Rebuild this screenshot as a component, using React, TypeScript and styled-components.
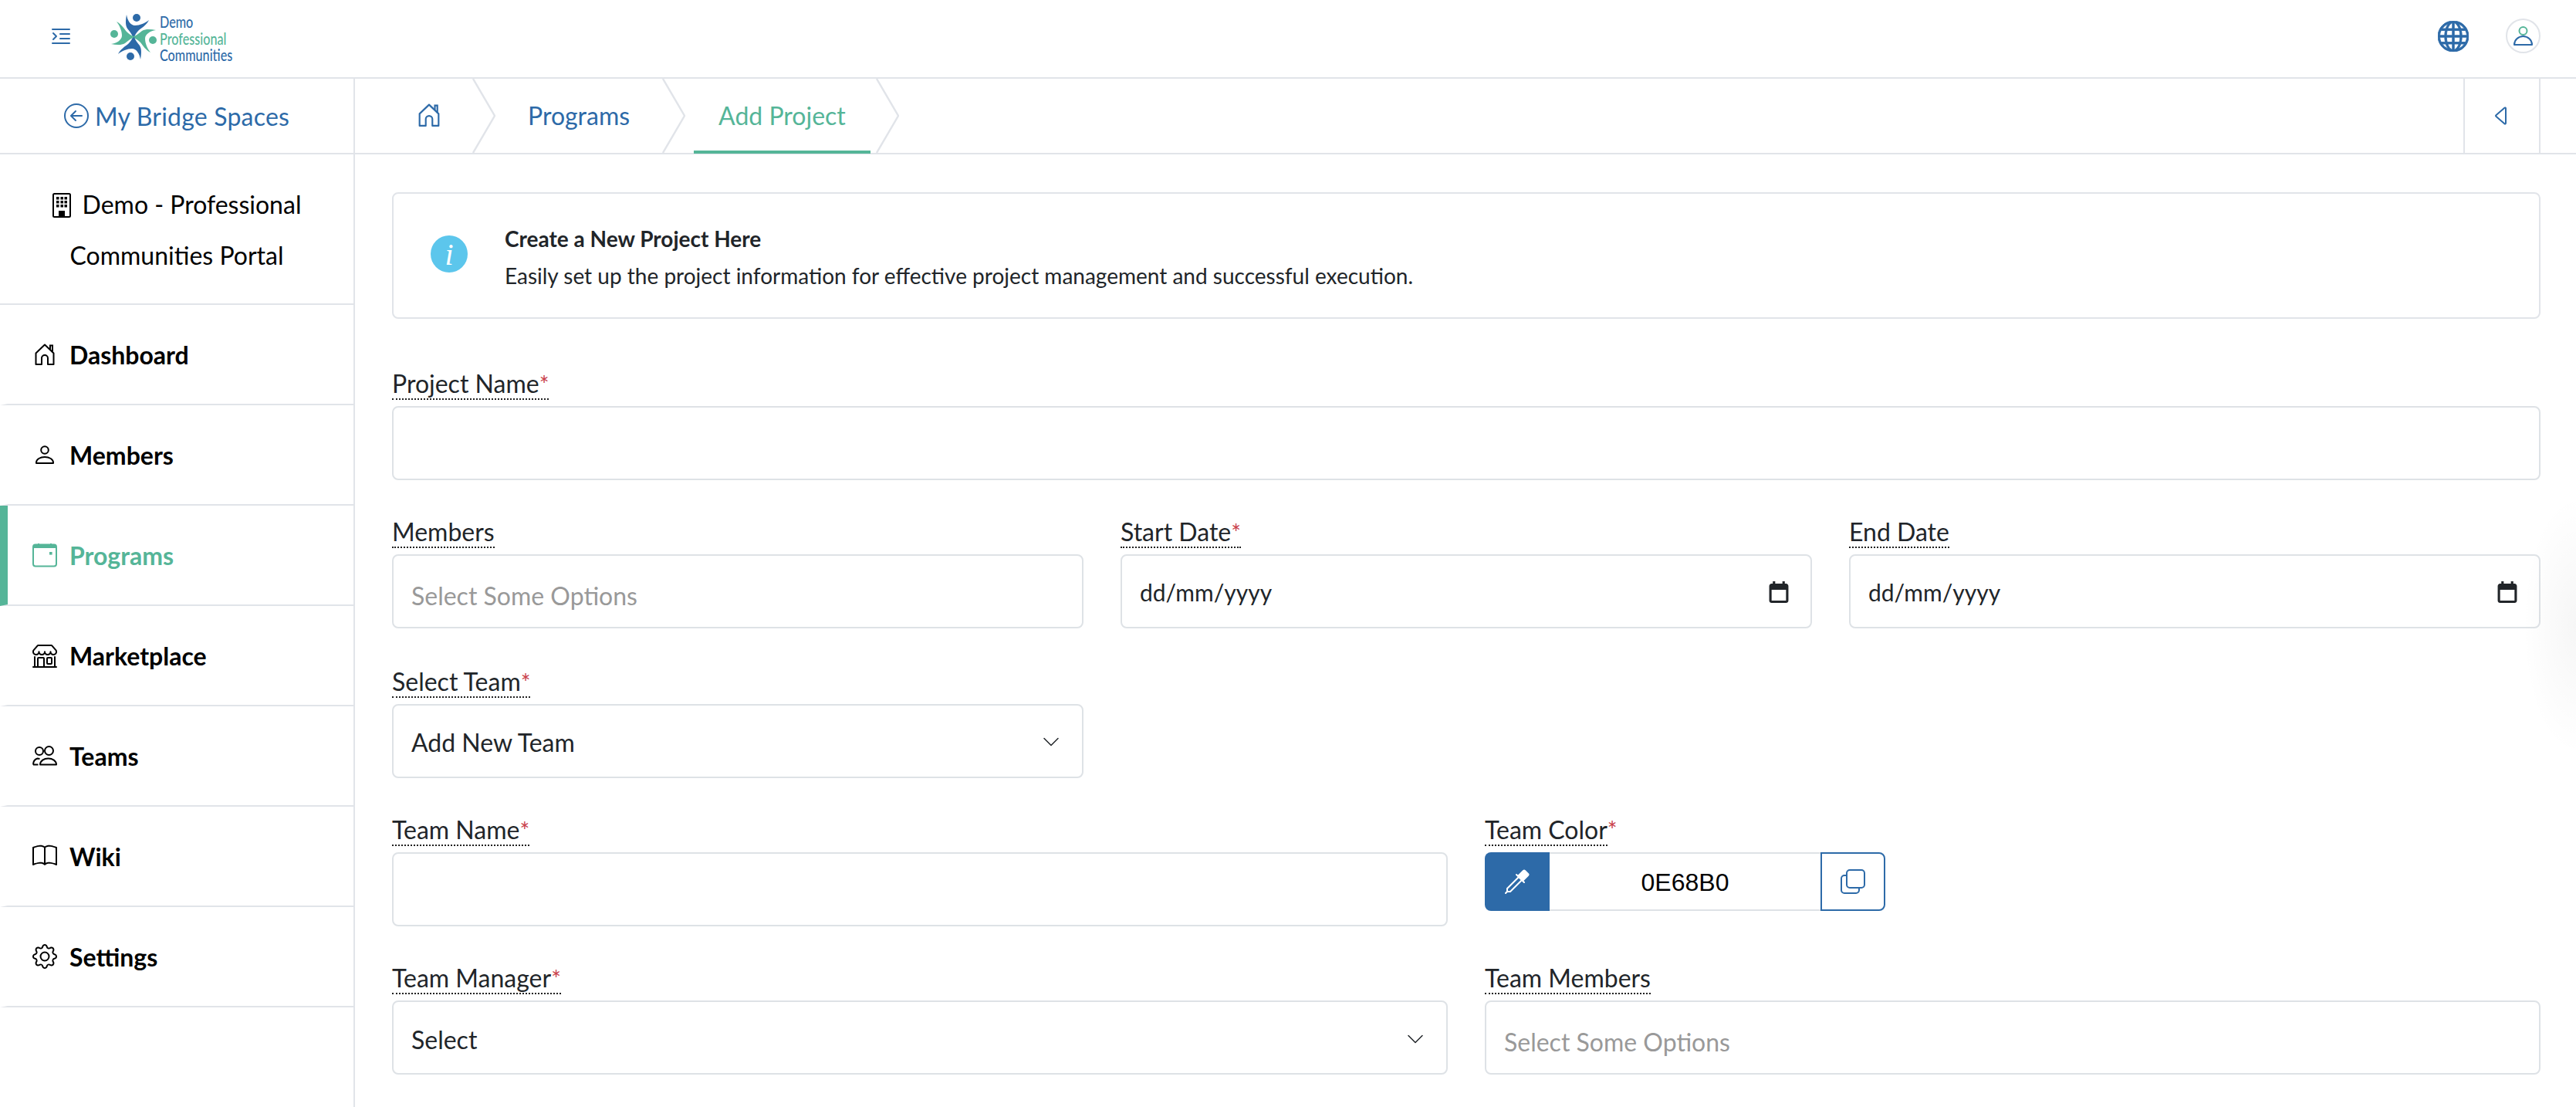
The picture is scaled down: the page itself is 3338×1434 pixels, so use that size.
import React, { FC } from 'react';
import styled, { createGlobalStyle } from 'styled-components';
import {
  BsArrowLeftCircle,
  BsBook,
  BsCaretLeft,
  BsChevronDown,
  BsEyedropper,
  BsGear,
  BsGlobe,
  BsShop,
  BsTextIndentLeft,
} from 'react-icons/bs';

const BLUE = '#2d6aa8';
const GREEN = '#55b598';
const LINE = '#e1e4e9';
const INK = '#212529';

const GlobalStyle = createGlobalStyle`
  html, body {
    margin: 0;
    padding: 0;
    background: #fff;
  }
  body {
    font-family: Lato, "Open Sans", sans-serif;
    color: ${INK};
    overflow: hidden;
  }
  * {
    box-sizing: border-box;
  }
`;

const Page = styled.div`
  width: 3338px;
  height: 1434px;
  overflow: hidden;
  position: relative;
`;

const TopBar = styled.header`
  height: 102px;
  border-bottom: 2px solid ${LINE};
  display: flex;
  align-items: center;
  padding: 0 46px 7px 63px;
`;

const Toggler = styled.span`
  display: flex;
  color: ${BLUE};
  margin-right: 48px;
`;

const Logo = styled.div`
  display: flex;
  align-items: center;
  gap: 4px;
  margin-top: 3px;
`;

const LogoWords = styled.div`
  font-family: 'Lato', sans-serif;
  font-size: 21px;
  font-weight: 500;
  line-height: 21.5px;
  margin-top: 3px;
  transform: scaleX(0.77);
  transform-origin: left center;
`;

const LogoLine = styled.div<{ $green?: boolean }>`
  color: ${({ $green }) => ($green ? GREEN : BLUE)};
`;

const TopActions = styled.div`
  margin-left: auto;
  display: flex;
  align-items: center;
  gap: 48px;
  color: ${BLUE};
`;

const Avatar = styled.span`
  width: 45px;
  height: 45px;
  border: 2px solid ${LINE};
  border-radius: 50%;
  display: flex;
  align-items: center;
  justify-content: center;
`;

const Body = styled.div`
  display: grid;
  grid-template-columns: 460px 1fr;
  height: 1332px;
`;

const Sidebar = styled.aside`
  border-right: 2px solid ${LINE};
`;

const BackLink = styled.a`
  height: 98px;
  border-bottom: 2px solid ${LINE};
  display: flex;
  align-items: center;
  justify-content: center;
  gap: 8px;
  color: ${BLUE};
  font-size: 32px;
  letter-spacing: 0.2px;
`;

const Brand = styled.div`
  height: 195px;
  border-bottom: 2px solid ${LINE};
  padding-top: 32px;
  text-align: center;
  font-size: 32px;
  line-height: 66px;
  color: #000;

  svg {
    vertical-align: -5px;
    margin-right: 15px;
  }
`;

const NavList = styled.nav`
  display: flex;
  flex-direction: column;
`;

const NavItem = styled.a<{ $active?: boolean }>`
  height: 130px;
  border-bottom: 2px solid ${LINE};
  border-left: 10px solid ${({ $active }) => ($active ? GREEN : 'transparent')};
  display: flex;
  align-items: center;
  gap: 16px;
  padding-left: 32px;
  font-size: 32px;
  font-weight: 700;
  color: ${({ $active }) => ($active ? GREEN : '#000')};
`;

const NavIcon = styled.span`
  width: 32px;
  height: 32px;
  display: flex;
  align-items: center;
  justify-content: center;
`;

const Main = styled.main`
  min-width: 0;
`;

const Crumbs = styled.div`
  height: 98px;
  border-bottom: 2px solid ${LINE};
  display: flex;
  align-items: stretch;
  padding-right: 46px;
`;

const Crumb = styled.a<{ $current?: boolean }>`
  display: flex;
  align-items: center;
  padding: 1px 32px 0;
  margin: ${({ $current }) => ($current ? '0 7px 0 11px' : '0')};
  font-size: 32px;
  color: ${({ $current }) => ($current ? GREEN : BLUE)};
  border-bottom: 4px solid ${({ $current }) => ($current ? GREEN : 'transparent')};
  margin-bottom: -1px;
`;

const HomeCrumb = styled(Crumb)`
  padding: 0 42px 0 82px;
`;

const PlainCrumb = styled(Crumb)`
  padding: 1px 42px 0;
`;

const CrumbArrow = styled.svg`
  width: 30px;
  height: 96px;
  flex: none;
`;

const PanelToggle = styled.button`
  margin-left: auto;
  width: 100px;
  background: none;
  border: 0;
  border-left: 2px solid ${LINE};
  border-right: 2px solid ${LINE};
  color: ${BLUE};
  display: flex;
  align-items: center;
  justify-content: center;
  padding: 0;
`;

const Content = styled.section`
  padding: 49px 46px 0 48px;
`;

const Notice = styled.div`
  height: 164px;
  border: 2px solid ${LINE};
  border-radius: 8px;
  display: flex;
  align-items: center;
  padding-left: 48px;
  gap: 48px;
  margin-bottom: 67px;
`;

const NoticeDot = styled.span`
  width: 48px;
  height: 48px;
  margin-bottom: 4px;
  border-radius: 50%;
  background: #5cc6ec;
  color: #fff;
  font-family: 'Liberation Serif', serif;
  font-style: italic;
  font-size: 40px;
  display: flex;
  align-items: center;
  justify-content: center;
`;

const NoticeCopy = styled.div`
  padding-top: 3px;
`;

const NoticeTitle = styled.div`
  font-size: 28px;
  font-weight: 700;
  line-height: 48px;
`;

const NoticeText = styled.div`
  font-size: 28px;
  line-height: 48px;
`;

const Row = styled.div<{ $cols: number; $after?: number }>`
  display: grid;
  grid-template-columns: repeat(${({ $cols }) => $cols}, 1fr);
  column-gap: 48px;
  margin-bottom: ${({ $after }) => $after ?? 50}px;
`;

const Field = styled.div``;

const Label = styled.label`
  display: flex;
  width: fit-content;
  height: 38px;
  margin-bottom: 8px;
  font-size: 32px;
  line-height: 33px;
  color: ${INK};
`;

const LabelText = styled.span`
  display: block;
  height: 38px;
  border-bottom: 2px dotted #222;
`;

const Star = styled.span`
  color: #c9404a;
  font-size: 30px;
`;

const Box = styled.div<{ $muted?: boolean; $drop?: number }>`
  height: 96px;
  border: 2px solid #dee2e6;
  border-radius: 8px;
  padding: ${({ $drop }) => $drop ?? 2}px 28px 0 23px;
  display: flex;
  align-items: center;
  justify-content: space-between;
  font-size: 32px;
  color: ${({ $muted }) => ($muted ? '#999' : INK)};
`;

const DateText = styled.span`
  font-size: 30px;
`;

const BlankInput = styled.input`
  width: 100%;
  height: 96px;
  display: block;
  border: 2px solid #dee2e6;
  border-radius: 8px;
  background: #fff;
  outline: none;
`;

const ColorGroup = styled.div`
  display: flex;
  height: 76px;
`;

const PickerButton = styled.span`
  width: 84px;
  background: ${BLUE};
  color: #fff;
  border-radius: 8px 0 0 8px;
  display: flex;
  align-items: center;
  justify-content: center;
`;

const HexValue = styled.span`
  width: 351px;
  padding-top: 3px;
  border-top: 2px solid #dee2e6;
  border-bottom: 2px solid #dee2e6;
  display: flex;
  align-items: center;
  justify-content: center;
  font-family: 'Liberation Sans', Arial, sans-serif;
  font-size: 32px;
  color: #000;
`;

const CopyButton = styled.span`
  width: 84px;
  border: 2px solid ${BLUE};
  border-radius: 0 8px 8px 0;
  color: ${BLUE};
  display: flex;
  align-items: center;
  justify-content: center;
`;

const EdgeGlow = styled.div`
  position: absolute;
  right: 0;
  top: 640px;
  width: 70px;
  height: 340px;
  background: radial-gradient(ellipse at right center, rgba(0, 0, 0, 0.035), rgba(0, 0, 0, 0) 70%);
`;

const HomeIcon: FC<{ size: number }> = ({ size }) => (
  <svg width={size} height={size + 2} viewBox="0 0 26 28" fill="none" stroke="currentColor" strokeWidth="2">
    <path d="M1.5 27V12.5L13 1.5l11.5 11V27H17v-8a4 4 0 0 0-8 0v8z" strokeLinejoin="round" />
    <path d="M20 8V2.5h3v9" />
  </svg>
);

const PersonIcon: FC = () => (
  <svg width="24" height="24" viewBox="0 0 24 24" fill="none" stroke="currentColor" strokeWidth="2">
    <circle cx="12" cy="6" r="4.8" />
    <path d="M1 23v-1c0-4 5-7 11-7s11 3 11 7v1z" strokeLinejoin="round" />
  </svg>
);

const CalendarIcon: FC = () => (
  <svg width="32" height="32" viewBox="0 0 32 32" fill="none" stroke="currentColor" strokeWidth="2">
    <rect x="1" y="2.5" width="30" height="28" rx="3" />
    <path d="M1 5h30" strokeWidth="4" />
    <path d="M8 1v3M24 1v3" />
    <rect x="22" y="12" width="3.6" height="3.6" fill="currentColor" stroke="none" />
  </svg>
);

const TeamIcon: FC = () => (
  <svg width="32" height="26" viewBox="0 0 32 26" fill="none" stroke="currentColor" strokeWidth="2">
    <circle cx="9" cy="7" r="5" />
    <circle cx="21.5" cy="6.5" r="5.5" />
    <path d="M10 24.5c0-5 5-8 10.5-8S31 19.5 31 24.5z" strokeLinejoin="round" />
    <path d="M1 24.5c0-4 2.500-7 5.500-8l3 .5M1 24.500h6.500" />
  </svg>
);

const BuildingIcon: FC = () => (
  <svg width="24" height="32" viewBox="0 0 24 32">
    <rect x="1" y="1" width="22" height="30" rx="1.500" fill="none" stroke="currentColor" strokeWidth="2" />
    {[5, 10.5, 15.5].map((x) =>
      [5, 10, 15].map((y) => <rect key={`${x}-${y}`} x={x} y={y} width="3.500" height="3.500" fill="currentColor" />),
    )}
    <rect x="8" y="23" width="8" height="8" fill="currentColor" />
  </svg>
);

const DateIcon: FC = () => (
  <svg width="26" height="28" viewBox="0 0 16 18" fill="currentColor">
    <path d="M14 2h-1V0h-2v2H5V0H3v2H2C.9 2 0 2.900 0 4v12c0 1.100.9 2 2 2h12c1.100 0 2-.9 2-2V4c0-1.100-.9-2-2-2zm0 14H2V7h12v9z" />
  </svg>
);

const CopyIcon: FC = () => (
  <svg width="32" height="32" viewBox="0 0 32 32" fill="none" stroke="currentColor" strokeWidth="2">
    <rect x="8" y="1" width="23" height="23" rx="4" />
    <path d="M8 8H5a4 4 0 0 0-4 4v15a4 4 0 0 0 4 4h15a4 4 0 0 0 4-4v-3" />
  </svg>
);

const LogoMark: FC = () => {
  const blade = (
    <>
      <path d="M21 1c1 7 5 14 11 14 6 0 13-3 18-7-3 6-9 10-13 13-3 3-5 6-6 9h-2c-1-4-4-7-7-11-3-5-2-12-1-18z" />
      <circle cx="34" cy="5" r="5" />
    </>
  );
  return (
    <svg width="60" height="60" viewBox="0 0 60 60">
      <g fill={BLUE}>{blade}</g>
      <g fill={GREEN} transform="rotate(90 30 30)">{blade}</g>
      <g fill={BLUE} transform="rotate(180 30 30)">{blade}</g>
      <g fill={GREEN} transform="rotate(270 30 30)">{blade}</g>
    </svg>
  );
};

const navItems = [
  { label: 'Dashboard', icon: <HomeIcon size={26} /> },
  { label: 'Members', icon: <PersonIcon /> },
  { label: 'Programs', icon: <CalendarIcon />, active: true },
  { label: 'Marketplace', icon: <BsShop size={32} /> },
  { label: 'Teams', icon: <TeamIcon /> },
  { label: 'Wiki', icon: <BsBook size={32} /> },
  { label: 'Settings', icon: <BsGear size={32} /> },
];

type LabelProps = { text: string; required?: boolean; starOutside?: boolean };

const FieldLabel: FC<LabelProps> = ({ text, required, starOutside }) => (
  <Label>
    <LabelText>
      {text}
      {required && !starOutside && <Star>*</Star>}
    </LabelText>
    {starOutside && <Star>*</Star>}
  </Label>
);

const Arrow: FC = () => (
  <CrumbArrow viewBox="0 0 30 96" fill="none" stroke={LINE} strokeWidth="2.4">
    <path d="M1 0l28 48L1 96" />
  </CrumbArrow>
);

const App: FC = () => (
  <Page>
    <GlobalStyle />
    <TopBar>
      <Toggler>
        <BsTextIndentLeft size={32} />
      </Toggler>
      <Logo>
        <LogoMark />
        <LogoWords>
          <LogoLine>Demo</LogoLine>
          <LogoLine $green>Professional</LogoLine>
          <LogoLine>Communities</LogoLine>
        </LogoWords>
      </Logo>
      <TopActions>
        <BsGlobe size={40} stroke="currentColor" strokeWidth={0.35} />
        <Avatar>
          <svg width="25" height="25" viewBox="0 0 25 25" fill="none" strokeWidth="2">
            <circle cx="12.500" cy="6" r="5" stroke={GREEN} />
            <path d="M1 24c0-6 5-11 11.500-11S24 18 24 24z" stroke={BLUE} strokeLinejoin="round" />
          </svg>
        </Avatar>
      </TopActions>
    </TopBar>
    <Body>
      <Sidebar>
        <BackLink>
          <BsArrowLeftCircle size={32} />
          My Bridge Spaces
        </BackLink>
        <Brand>
          <BuildingIcon />
          Demo - Professional
          <br />
          Communities Portal
        </Brand>
        <NavList>
          {navItems.map((item) => (
            <NavItem key={item.label} $active={item.active}>
              <NavIcon>{item.icon}</NavIcon>
              {item.label}
            </NavItem>
          ))}
        </NavList>
      </Sidebar>
      <Main>
        <Crumbs>
          <HomeCrumb>
            <HomeIcon size={28} />
          </HomeCrumb>
          <Arrow />
          <PlainCrumb>Programs</PlainCrumb>
          <Arrow />
          <Crumb $current>Add Project</Crumb>
          <Arrow />
          <PanelToggle>
            <BsCaretLeft size={32} />
          </PanelToggle>
        </Crumbs>
        <Content>
          <Notice>
            <NoticeDot>i</NoticeDot>
            <NoticeCopy>
              <NoticeTitle>Create a New Project Here</NoticeTitle>
              <NoticeText>
                Easily set up the project information for effective project management and successful execution.
              </NoticeText>
            </NoticeCopy>
          </Notice>
          <Row $cols={1}>
            <Field>
              <FieldLabel text="Project Name" required />
              <BlankInput />
            </Field>
          </Row>
          <Row $cols={3} $after={52}>
            <Field>
              <FieldLabel text="Members" />
              <Box $muted $drop={10}>Select Some Options</Box>
            </Field>
            <Field>
              <FieldLabel text="Start Date" required />
              <Box>
                <DateText>dd/mm/yyyy</DateText>
                <DateIcon />
              </Box>
            </Field>
            <Field>
              <FieldLabel text="End Date" />
              <Box>
                <DateText>dd/mm/yyyy</DateText>
                <DateIcon />
              </Box>
            </Field>
          </Row>
          <Row $cols={3}>
            <Field>
              <FieldLabel text="Select Team" required />
              <Box>
                Add New Team
                <BsChevronDown size={24} />
              </Box>
            </Field>
          </Row>
          <Row $cols={2}>
            <Field>
              <FieldLabel text="Team Name" required />
              <BlankInput />
            </Field>
            <Field>
              <FieldLabel text="Team Color" required starOutside />
              <ColorGroup>
                <PickerButton>
                  <BsEyedropper size={32} />
                </PickerButton>
                <HexValue>0E68B0</HexValue>
                <CopyButton>
                  <CopyIcon />
                </CopyButton>
              </ColorGroup>
            </Field>
          </Row>
          <Row $cols={2}>
            <Field>
              <FieldLabel text="Team Manager" required />
              <Box $drop={4}>
                Select
                <BsChevronDown size={24} />
              </Box>
            </Field>
            <Field>
              <FieldLabel text="Team Members" />
              <Box $muted $drop={10}>Select Some Options</Box>
            </Field>
          </Row>
        </Content>
      </Main>
    </Body>
    <EdgeGlow />
  </Page>
);

export default App;
